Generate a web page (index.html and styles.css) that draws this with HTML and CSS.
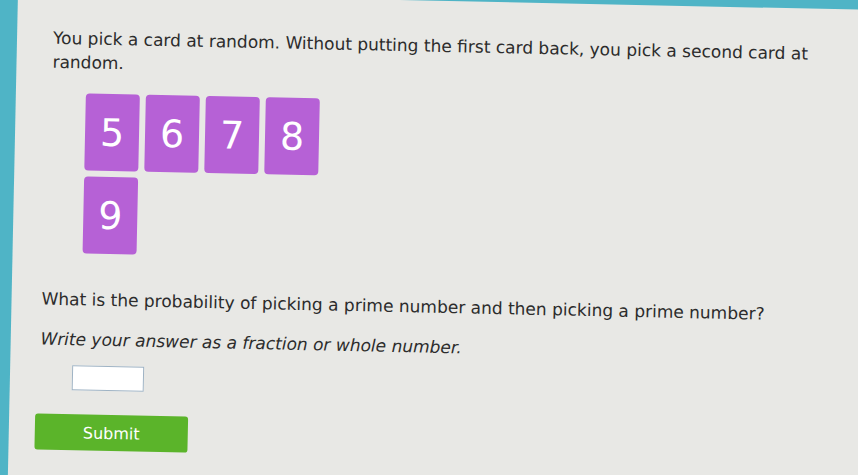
FILE: index.html
```html
<!DOCTYPE html>
<html lang="en">
<head>
<meta charset="utf-8">
<title>Probability practice</title>
<link rel="stylesheet" href="styles.css">
</head>
<body>
<main class="panel">
  <p class="prompt">You pick a card at random. Without putting the first card back, you pick a second card at random.</p>

  <div class="cards">
    <div class="card-row">
      <div class="card">5</div>
      <div class="card">6</div>
      <div class="card">7</div>
      <div class="card">8</div>
    </div>
    <div class="card-row">
      <div class="card">9</div>
    </div>
  </div>

  <p class="question">What is the probability of picking a prime number and then picking a prime number?</p>
  <p class="hint">Write your answer as a fraction or whole number.</p>

  <div class="answer">
    <input class="answer-box" type="text" aria-label="Answer">
  </div>

  <button class="submit" type="button">Submit</button>
</main>
</body>
</html>
```

FILE: styles.css
```css
html, body {
  margin: 0;
  padding: 0;
  height: 100%;
  overflow: hidden;
}

body {
  background: #4fb4c6;
  font-family: "DejaVu Sans", Verdana, sans-serif;
  color: #2c2c2c;
}

.panel {
  box-sizing: border-box;
  width: 900px;
  height: 520px;
  margin: -8px 0 0 18px;
  padding: 33px 0 0 36px;
  background: #e8e8e5;
  transform: rotate(1.2deg);
  transform-origin: 0 0;
}

.prompt {
  margin: 0;
  width: 770px;
  font-size: 17px;
  line-height: 24px;
}

.cards {
  display: flex;
  flex-direction: column;
  gap: 6px;
  margin: 19px 0 0 34px;
}

.card-row {
  display: flex;
  gap: 6px;
}

.card {
  width: 54px;
  height: 77px;
  display: flex;
  align-items: center;
  justify-content: center;
  background: #b661d6;
  border-radius: 4px;
  color: #fff;
  font-size: 38px;
}

.question {
  margin: 34px 0 0 -6px;
  font-size: 17px;
  line-height: 24px;
}

.hint {
  margin: 16px 0 0 -6px;
  font-size: 17px;
  line-height: 24px;
  font-style: italic;
}

.answer {
  display: flex;
  margin: 14px 0 0 26px;
}

.answer-box {
  box-sizing: border-box;
  width: 72px;
  height: 25px;
  margin: 0;
  border: 1px solid #9fb3c4;
  background: #fff;
}

.submit {
  display: block;
  width: 153px;
  height: 36px;
  margin: 24px 0 0 -10px;
  border: none;
  border-radius: 3px;
  background: #5bb42a;
  color: #fff;
  font-family: "DejaVu Sans", Verdana, sans-serif;
  font-size: 16px;
}
```
